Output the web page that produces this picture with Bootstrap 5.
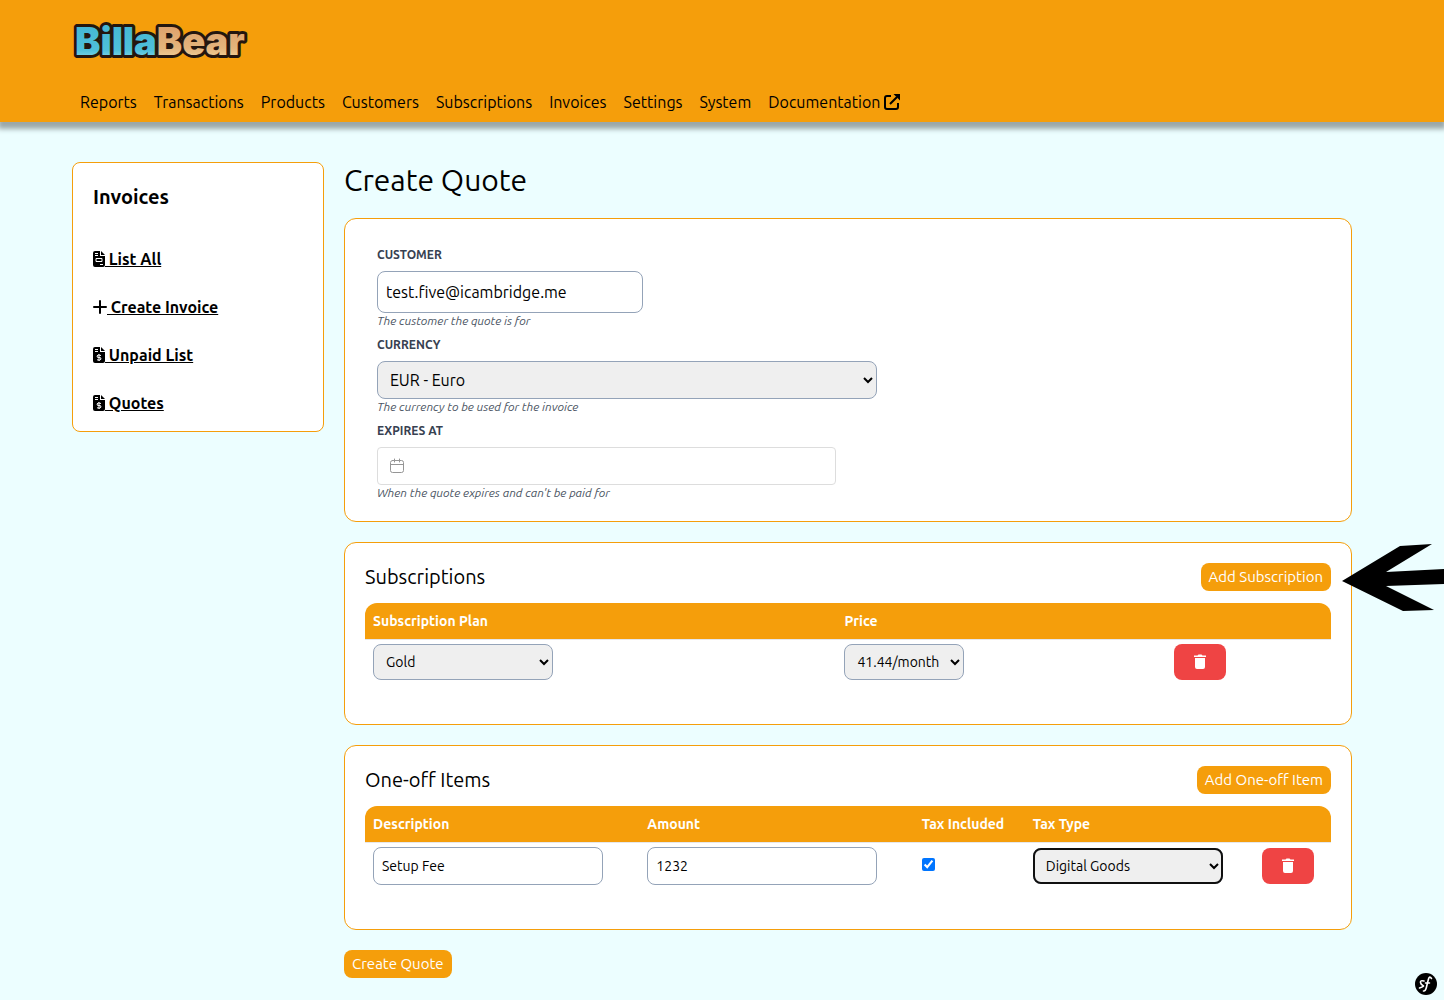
<!DOCTYPE html>
<html lang="en">
<head>
<meta charset="utf-8">
<meta name="viewport" content="width=device-width, initial-scale=1">
<title>BillaBear - Create Quote</title>
<link href="https://cdn.jsdelivr.net/npm/bootstrap@5.3.0/dist/css/bootstrap.min.css" rel="stylesheet">
<style>
  :root { --bb-orange: #f59e0b; --bb-slate: #94a3b8; }
  body { font-family: Ubuntu, "Noto Sans", sans-serif; font-size: 16px; line-height: 24px; color: #000; background: #ecfeff; }
  a { color: #000; }
  .page-gutter { padding-left: 72px; padding-right: 92px; }
  .site-header { background: var(--bb-orange); box-shadow: 0 5px 5px 2px #9ba8a9; padding-top: 14px; padding-bottom: 8px; }
  .brand-link { display: block; width: 180px; margin-bottom: 24px; }
  .brand-logo { display: block; width: 180px; height: 52px; overflow: visible; }
  .brand-logo text { font-family: Inter, sans-serif; font-weight: 900; font-size: 38px; stroke: #24160f; stroke-width: 6px; stroke-linejoin: round; paint-order: stroke; }
  .top-nav { gap: 1px; }
  .top-nav .nav-link { color: #000; padding: 0 8px; }
  .page-body { padding-top: 40px; padding-bottom: 20px; gap: 20px; }
  .side-panel { flex: 0 0 252px; padding: 20px 20px 16px; background: #fff; border: 1px solid var(--bb-orange); border-radius: 8px; }
  .side-panel h2 { font-size: 20px; font-weight: 700; line-height: 28px; margin-bottom: 36px; }
  .side-panel ul { gap: 24px; }
  .side-panel a { font-weight: 700; }
  .side-panel svg { vertical-align: -2px; }
  .page-title { font-size: 30px; font-weight: 400; line-height: 36px; margin-bottom: 20px; }
  .panel { position: relative; padding: 20px; margin-bottom: 20px; background: #fff; border: 1px solid var(--bb-orange); border-radius: 12px; }
  .panel h2 { font-size: 20px; font-weight: 400; line-height: 28px; margin: 0; }
  .form-group-bb { padding: 8px 12px 0; }
  .form-group-bb label { display: block; font-size: 12px; font-weight: 700; line-height: 16px; margin-bottom: 8px; text-transform: uppercase; color: #374151; }
  .help-note { font-size: 12px; font-style: italic; line-height: 16px; color: #4b5563; margin: 0; }
  .field { display: block; max-width: 100%; padding: 0 8px; border: 1px solid var(--bb-slate); border-radius: 8px; background: #fff; color: #000; }
  select.field { background: #efefef; }
  .h-42 { height: 42px; width: 266px; }
  .h-38 { height: 38px; }
  .h-36 { height: 36px; }
  .currency { width: 500px; }
  .date-box { position: relative; width: 459px; max-width: 100%; }
  .date-box input { width: 100%; padding-left: 36px; border-color: #ddd; border-radius: 4px; }
  .date-box svg { position: absolute; left: 12px; top: 11px; }
  .btn-bb { padding: 0 8px; border: 0; border-radius: 8px; background: var(--bb-orange); color: #fff; font-size: 15px; line-height: 28px; }
  .btn-remove { width: 52px; height: 36px; padding: 0 0 2px; border: 0; border-radius: 8px; background: #ef4444; }
  .items { width: 100%; table-layout: fixed; margin: 12px 0 20px; border-collapse: separate; border-spacing: 0; font-size: 14px; }
  .items th { height: 37px; padding: 0 8px; background: var(--bb-orange); background-clip: padding-box; color: #fff; border-bottom: 1px solid #e5e7eb; line-height: 20px; }
  .items th:first-child { border-top-left-radius: 12px; }
  .items th:last-child { border-top-right-radius: 12px; }
  .items td { padding: 4px 8px; }
  .col-plan { width: 48.8%; } .col-price { width: 34.1%; }
  .col-text { width: 28.4%; } .col-tax { width: 11.5%; } .col-type { width: 23.7%; }
  .w-230 { width: 230px; } .w-190 { width: 190px; } .w-180 { width: 180px; }
  .is-active { outline: 2px solid #101010; outline-offset: -2px; }
  .items input[type=checkbox] { display: block; width: 13px; height: 13px; margin: 0 0 4px; accent-color: #0075ff; }
  .callout-arrow { position: absolute; right: -93px; top: 1px; }
  .debug-badge { position: fixed; right: 7px; bottom: 5px; }
</style>
<script src="https://cdn.jsdelivr.net/npm/bootstrap@5.3.0/dist/js/bootstrap.bundle.min.js"></script>
</head>
<body>
<header class="site-header page-gutter">
  <a href="#" aria-label="BillaBear" class="brand-link">
    <svg class="brand-logo" viewBox="0 0 180 52">
      <defs>
        <linearGradient id="blue" x1="0" y1="0" x2="0" y2="1"><stop offset="0" stop-color="#42b4d2"/><stop offset=".7" stop-color="#4fc0da"/><stop offset="1" stop-color="#a3e4ee"/></linearGradient>
        <linearGradient id="tan" x1="0" y1="0" x2="0" y2="1"><stop offset="0" stop-color="#dc9a66"/><stop offset=".65" stop-color="#e4b47c"/><stop offset="1" stop-color="#f6dfa8"/></linearGradient>
      </defs>
      <text x="3" y="41"><tspan fill="url(#blue)">Billa</tspan><tspan fill="url(#tan)">Bear</tspan></text>
    </svg>
  </a>
  <nav class="nav top-nav" aria-label="Main">
    <a class="nav-link" href="#">Reports</a>
    <a class="nav-link" href="#">Transactions</a>
    <a class="nav-link" href="#">Products</a>
    <a class="nav-link" href="#">Customers</a>
    <a class="nav-link" href="#">Subscriptions</a>
    <a class="nav-link" href="#">Invoices</a>
    <a class="nav-link" href="#">Settings</a>
    <a class="nav-link" href="#">System</a>
    <a class="nav-link d-flex align-items-center gap-1" href="#">Documentation
      <svg width="16" height="16" viewBox="0 0 16 16" fill="none" stroke="#000" stroke-width="2"><path d="M7 2H3Q1 2 1 4v9q0 2 2 2h9q2 0 2-2V9M6 10l7-7"/><path d="M9.500 0H16v6.500z" fill="#000" stroke="none"/></svg>
    </a>
  </nav>
</header>

<div class="page-body page-gutter d-flex align-items-start">
  <aside class="side-panel">
    <h2>Invoices</h2>
    <ul class="list-unstyled d-flex flex-column mb-0">
      <li><a href="#"><svg width="12" height="16" viewBox="0 0 12 16"><path d="M2 0h5v5h5v9q0 2-2 2H2q-2 0-2-2V2Q0 0 2 0zM8 0l4 4H8z"/><path d="M2 2.500h3M2 4.500h3M3 7.500h6v3H3zM7 13.500h3" stroke="#fff" fill="none"/></svg> List All</a></li>
      <li><a href="#"><svg width="14" height="16" viewBox="0 0 14 16"><path d="M7 2v12M1 8h12" stroke="#000" stroke-width="2" stroke-linecap="round"/></svg> Create Invoice</a></li>
      <li><a href="#"><svg width="12" height="16" viewBox="0 0 12 16"><path d="M2 0h5v5h5v9q0 2-2 2H2q-2 0-2-2V2Q0 0 2 0zM8 0l4 4H8z"/><path d="M2 2.500h3M2 4.500h3M8 8.500Q4 7 4 9t2 1.500 2 1.500-4 .8M6 7v7" stroke="#fff" fill="none"/></svg> Unpaid List</a></li>
      <li><a href="#"><svg width="12" height="16" viewBox="0 0 12 16"><path d="M2 0h5v5h5v9q0 2-2 2H2q-2 0-2-2V2Q0 0 2 0zM8 0l4 4H8z"/><path d="M2 2.500h3M2 4.500h3M8 8.500Q4 7 4 9t2 1.500 2 1.500-4 .8M6 7v7" stroke="#fff" fill="none"/></svg> Quotes</a></li>
    </ul>
  </aside>

  <main class="flex-grow-1">
    <h1 class="page-title">Create Quote</h1>

    <section class="panel">
      <div class="form-group-bb">
        <label for="customer">Customer</label>
        <input id="customer" type="text" class="field h-42" value="test.five@icambridge.me">
        <p class="help-note">The customer the quote is for</p>
      </div>
      <div class="form-group-bb">
        <label for="currency">Currency</label>
        <select id="currency" class="field h-38 currency"><option>EUR - Euro</option></select>
        <p class="help-note">The currency to be used for the invoice</p>
      </div>
      <div class="form-group-bb">
        <label for="expires">Expires At</label>
        <div class="date-box">
          <input id="expires" type="text" class="field h-38">
          <svg width="16" height="16" viewBox="0 0 16 16" fill="none" stroke="#959595" stroke-linecap="round"><rect x="1.500" y="2.500" width="13" height="12" rx="2"/><path d="M1.500 6.500h13M5.500 1v3M10.500 1v3"/></svg>
        </div>
        <p class="help-note">When the quote expires and can't be paid for</p>
      </div>
    </section>

    <section class="panel">
      <div class="d-flex justify-content-between align-items-center">
        <h2>Subscriptions</h2>
        <button type="button" class="btn-bb">Add Subscription</button>
      </div>
      <table class="items">
        <colgroup><col class="col-plan"><col class="col-price"><col></colgroup>
        <thead><tr><th>Subscription Plan</th><th>Price</th><th></th></tr></thead>
        <tbody><tr>
          <td><select class="field h-36 w-180" aria-label="Subscription Plan"><option>Gold</option></select></td>
          <td><select class="field h-36" aria-label="Price"><option>41.44/month</option></select></td>
          <td><button type="button" class="btn-remove d-flex align-items-center justify-content-center" aria-label="Remove subscription"><svg width="12" height="15" viewBox="0 0 12 15" fill="#fff"><path d="M0 1.500h3.500L4.500.5h3l1 1H12V3H0zM1 4h10v9q0 2-2 2H3q-2 0-2-2z"/></svg></button></td>
        </tr></tbody>
      </table>
      <svg class="callout-arrow" width="102" height="68" viewBox="0 0 102 68" aria-hidden="true"><path d="M0 37L58 2 90 0 44 28 102 25V40L44 42 92 66 61 67z"/></svg>
    </section>

    <section class="panel">
      <div class="d-flex justify-content-between align-items-center">
        <h2>One-off Items</h2>
        <button type="button" class="btn-bb">Add One-off Item</button>
      </div>
      <table class="items">
        <colgroup><col class="col-text"><col class="col-text"><col class="col-tax"><col class="col-type"><col></colgroup>
        <thead><tr><th>Description</th><th>Amount</th><th>Tax Included</th><th>Tax Type</th><th></th></tr></thead>
        <tbody><tr>
          <td><input type="text" class="field h-38 w-230" aria-label="Description" value="Setup Fee"></td>
          <td><input type="text" class="field h-38 w-230" aria-label="Amount" value="1232"></td>
          <td><input type="checkbox" aria-label="Tax Included" checked></td>
          <td><select class="field h-36 w-190 is-active" aria-label="Tax Type"><option>Digital Goods</option></select></td>
          <td><button type="button" class="btn-remove d-flex align-items-center justify-content-center" aria-label="Remove item"><svg width="12" height="15" viewBox="0 0 12 15" fill="#fff"><path d="M0 1.500h3.500L4.500.5h3l1 1H12V3H0zM1 4h10v9q0 2-2 2H3q-2 0-2-2z"/></svg></button></td>
        </tr></tbody>
      </table>
    </section>

    <button type="submit" class="btn-bb">Create Quote</button>
  </main>
</div>

<a href="#" class="debug-badge d-flex" aria-label="Symfony toolbar">
  <svg width="22" height="22" viewBox="0 0 22 22"><circle cx="11" cy="11" r="11"/><path d="M9 8Q5 7 5.500 9.500T8 12.500 4.500 15M8.500 18Q10.500 18.500 11.500 14T13.500 6t3-.5M10.500 10h4" fill="none" stroke="#fff" stroke-width="1.600" stroke-linecap="round"/></svg>
</a>
</body>
</html>
